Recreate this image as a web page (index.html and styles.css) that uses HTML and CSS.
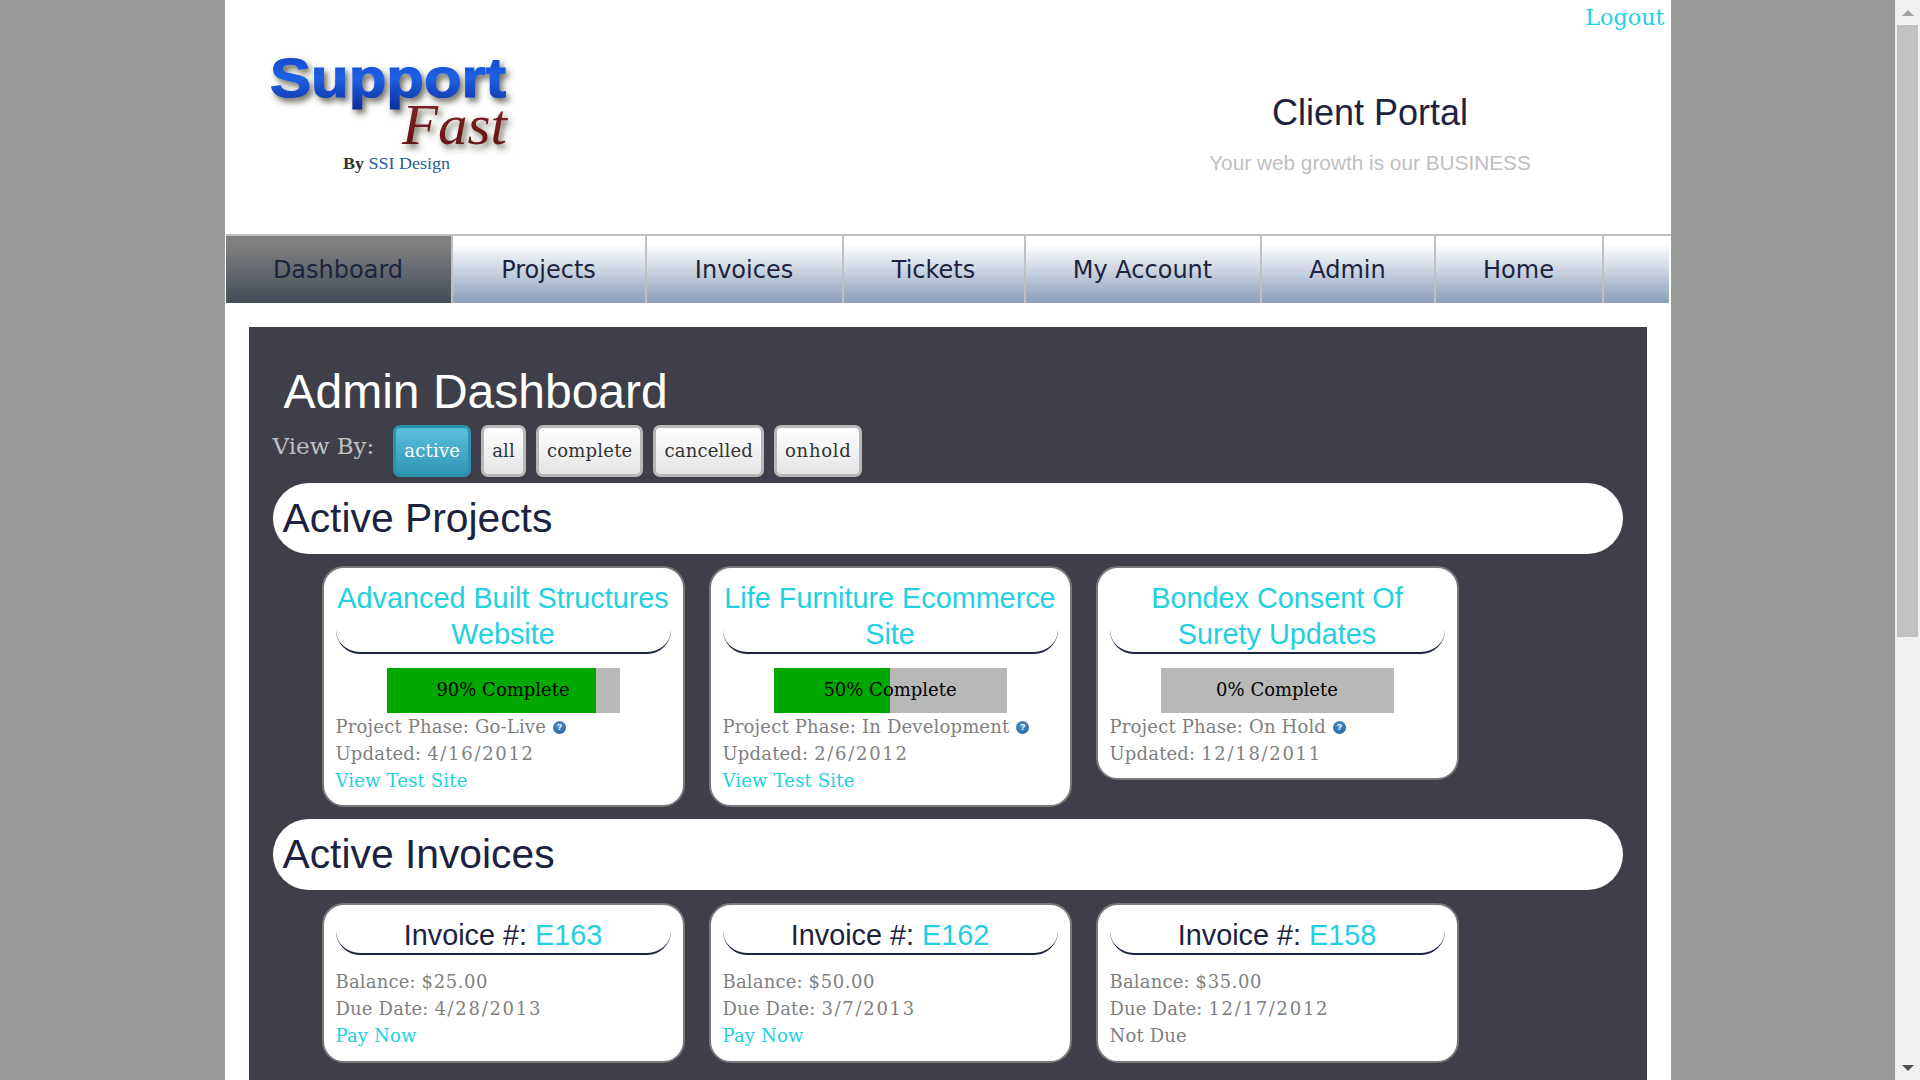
FILE: index.html
```html
<!DOCTYPE html>
<html lang="en">
    <head>
        <meta charset="utf-8">
        <title>Support Fast - Admin Dashboard</title>
        <link rel="stylesheet" href="styles.css">
    </head>
    <body>
    <div class="page">
    <div class="wrap">
        <div class="header">
            <div class="logout-row"><a href="#">Logout</a></div>
            <div class="brand-row">
                <svg class="logo" width="300" height="170" viewBox="0 0 300 170">
                    <defs>
                        <linearGradient id="blue" x1="0" y1="0" x2="0" y2="1">
                            <stop offset="0" stop-color="#0a3fc0"/>
                            <stop offset="0.5" stop-color="#1f60e6"/>
                            <stop offset="1" stop-color="#0c2f9c"/>
                        </linearGradient>
                        <linearGradient id="red" x1="0" y1="0" x2="0" y2="1">
                            <stop offset="0" stop-color="#8a2a2a"/>
                            <stop offset="1" stop-color="#5a0f12"/>
                        </linearGradient>
                        <filter id="shade" x="-10%" y="-20%" width="125%" height="150%">
                            <feDropShadow dx="3" dy="4" stdDeviation="3" flood-color="#3a3a2a" flood-opacity="0.75"/>
                        </filter>
                    </defs>
                    <text class="logo-support" x="45" y="64" textLength="236" lengthAdjust="spacingAndGlyphs" fill="url(#blue)" stroke="url(#blue)" stroke-width="1.2" filter="url(#shade)">Support</text>
                    <text class="logo-fast" x="177" y="111" textLength="105" lengthAdjust="spacingAndGlyphs" fill="url(#red)" filter="url(#shade)">Fast</text>
                    <text class="logo-by" x="118" y="136" textLength="107" lengthAdjust="spacingAndGlyphs">By <tspan class="logo-ssi">SSI Design</tspan></text>
                </svg>
                <div class="portal">
                    <div class="portal-title">Client Portal</div>
                    <div class="portal-sub">Your web growth is our BUSINESS</div>
                </div>
            </div>
        </div>

        <ul class="nav">
            <li class="current"><a href="#">Dashboard</a></li>
            <li><a href="#">Projects</a></li>
            <li><a href="#">Invoices</a></li>
            <li><a href="#">Tickets</a></li>
            <li><a href="#">My Account</a></li>
            <li><a href="#">Admin</a></li>
            <li><a href="#">Home</a></li>
            <li class="filler"></li>
        </ul>

        <div class="panel">
            <h1>Admin Dashboard</h1>
            <div class="view-by">
                <span class="view-label">View By:</span>
                <a class="btn btn-active" href="#">active</a>
                <a class="btn" href="#">all</a>
                <a class="btn" href="#">complete</a>
                <a class="btn" href="#">cancelled</a>
                <a class="btn" href="#">onhold</a>
            </div>

            <h2 class="bar">Active Projects</h2>
            <div class="cards">
                <div class="card">
                    <h3><a href="#">Advanced Built Structures Website</a></h3>
                    <div class="progress"><div class="fill" style="width:90%"></div><span>90% Complete</span></div>
                    <p>Project Phase: Go-Live <i class="info">?</i></p>
                    <p>Updated: <span class="num">4/16/2012</span></p>
                    <p><a href="#">View Test Site</a></p>
                </div>
                <div class="card">
                    <h3><a href="#">Life Furniture Ecommerce Site</a></h3>
                    <div class="progress"><div class="fill" style="width:50%"></div><span>50% Complete</span></div>
                    <p>Project Phase: In Development <i class="info">?</i></p>
                    <p>Updated: <span class="num">2/6/2012</span></p>
                    <p><a href="#">View Test Site</a></p>
                </div>
                <div class="card">
                    <h3><a href="#">Bondex Consent Of Surety Updates</a></h3>
                    <div class="progress"><span>0% Complete</span></div>
                    <p>Project Phase: On Hold <i class="info">?</i></p>
                    <p>Updated: <span class="num">12/18/2011</span></p>
                </div>
            </div>

            <h2 class="bar">Active Invoices</h2>
            <div class="cards invoices">
                <div class="card invoice">
                    <h3>Invoice #: <a href="#">E163</a></h3>
                    <p>Balance: <span class="amt">$25.00</span></p>
                    <p>Due Date: <span class="num">4/28/2013</span></p>
                    <p><a href="#">Pay Now</a></p>
                </div>
                <div class="card invoice">
                    <h3>Invoice #: <a href="#">E162</a></h3>
                    <p>Balance: <span class="amt">$50.00</span></p>
                    <p>Due Date: <span class="num">3/7/2013</span></p>
                    <p><a href="#">Pay Now</a></p>
                </div>
                <div class="card invoice">
                    <h3>Invoice #: <a href="#">E158</a></h3>
                    <p>Balance: <span class="amt">$35.00</span></p>
                    <p>Due Date: <span class="num">12/17/2012</span></p>
                    <p>Not Due</p>
                </div>
            </div>
        </div>
    </div>
    </div>

    <div class="scrollbar">
        <div class="sb-btn"><span class="arrow-up"></span></div>
        <div class="sb-thumb"></div>
        <div class="sb-track"></div>
        <div class="sb-btn"><span class="arrow-down"></span></div>
    </div>
    </body>
</html>
```

FILE: styles.css
```css
*{padding:0; margin:0; list-style:none; box-sizing:border-box;}
body{display:flex; height:100vh; overflow:hidden; background:#999b99; font-family:"DejaVu Serif", serif; color:#7f7f7f;}
a{color:#22d0e0; text-decoration:none;}

.page{flex:1; min-width:0; height:100%;}
.wrap{width:1446px; height:100%; margin:0 auto; background:#fff; display:flex; flex-direction:column;}

/* header */
.header{height:234px; flex:none; display:flex; flex-direction:column;}
.logout-row{text-align:right; padding:0 6px 1px 0; font-size:22.3px; line-height:34px;}
.brand-row{display:flex; justify-content:space-between;}
.logo{display:block; margin-top:-2px;}
.logo-support{font:bold 56px "Liberation Sans", sans-serif;}
.logo-fast{font:italic 58px "Liberation Serif", serif;}
.logo-by{font:bold 17px "Liberation Serif", serif; fill:#333;}
.logo-ssi{font-weight:normal; fill:#2b5c9e;}
.portal{width:601px; padding-top:57px; text-align:center; font-family:"Liberation Sans", sans-serif;}
.portal-title{font-size:36px; line-height:42px; color:#1c2340;}
.portal-sub{font-size:20.8px; line-height:24px; margin-top:17px; color:#c0c0c0;}

/* nav */
.nav{display:flex; flex:none; height:69px; border-top:2px solid #c0c0c0; margin-left:1px; font-family:"DejaVu Sans", sans-serif; font-size:24px; text-align:center;}
.nav li{border-right:2px solid #c0c0c0; background:linear-gradient(#fff 12%, #8a9fbc 100%);}
.nav li:nth-child(1){width:227px;}
.nav li:nth-child(2){width:194px;}
.nav li:nth-child(3){width:197px;}
.nav li:nth-child(4){width:182px;}
.nav li:nth-child(5){width:236px;}
.nav li:nth-child(6){width:174px;}
.nav li:nth-child(7){width:168px;}
.nav a{display:block; line-height:68px; color:#1c2340;}
.nav .current{background:linear-gradient(#808080 12%, #444c58 100%);}
.nav .filler{flex:1; border-right:0; margin-right:2px;}

/* main panel */
.panel{flex:1; margin:24px 24px 0; padding:0 24px; background:#3f3f49;}
.panel h1{padding:37px 0 0 11px; font:48px/56px "Liberation Sans", sans-serif; color:#fff;}
.view-by{display:flex; align-items:flex-start; gap:10px; margin-top:5px; height:52px;}
.view-label{font-size:23px; line-height:52px; color:#c0c0c0; margin-right:9px; margin-top:-5px;}
.btn{height:52px; padding:0 8px; border:3px solid #b8b8b8; border-radius:7px; background:linear-gradient(#fff, #e4e4e4); font-size:18px; letter-spacing:.2px; line-height:46px; color:#333;}
.btn:last-child{letter-spacing:.7px;}
.btn-active{border-color:#2f8fae; background:linear-gradient(#5bc0de, #2f96b4); color:#fff;}

.bar{height:71px; margin-top:6px; padding-left:10px; border-radius:36px; background:#fff; font:40.8px/71px "Liberation Sans", sans-serif; color:#1c2340;}

/* cards */
.cards{display:flex; align-items:flex-start; gap:24px; padding-left:49px; margin:12px 0;}
.cards.invoices{margin-top:13px;}
.card{width:363px; padding:12px 12px 11px; border:2px solid #7a7a7a; border-radius:22px; background:#fff; font-size:18px; line-height:27px;}
.card h3{margin-bottom:14px; border-bottom:2px solid #1c2340; border-radius:0 0 24px 24px; font:28.8px/36px "Liberation Sans", sans-serif; color:#1c2340; text-align:center;}
.card p{letter-spacing:.17px;}
.num{letter-spacing:1.7px;}
.amt{letter-spacing:.6px;}
.card.invoice{padding-bottom:12px;}
.card.invoice h3{margin-bottom:13px;}

.progress{position:relative; width:233px; height:45px; margin:0 auto; background:#b8b8b8; color:#000; text-align:center; line-height:43px;}
.fill{height:100%; background:#00a900;}
.progress span{position:absolute; left:0; right:0; top:0;}

.info{display:inline-block; width:13px; height:13px; margin-left:1px; border-radius:50%; background:radial-gradient(circle at 45% 35%, #4f94d0, #175a94); color:#fff; font:bold 9px/13px "Liberation Sans", sans-serif; letter-spacing:0; text-align:center; vertical-align:3px;}

/* fake scrollbar, the shot has one */
.scrollbar{width:25px; height:100%; display:flex; flex-direction:column; background:#f1f1f1;}
.sb-btn{height:25px; display:flex; align-items:center; justify-content:center; flex:none;}
.sb-thumb{height:612px; margin:0 2px; background:#c1c1c1; flex:none;}
.sb-track{flex:1;}
.arrow-up{border:6px solid transparent; border-top:0; border-bottom:6px solid #a3a3a3;}
.arrow-down{border:6px solid transparent; border-bottom:0; border-top:6px solid #505050;}
```
